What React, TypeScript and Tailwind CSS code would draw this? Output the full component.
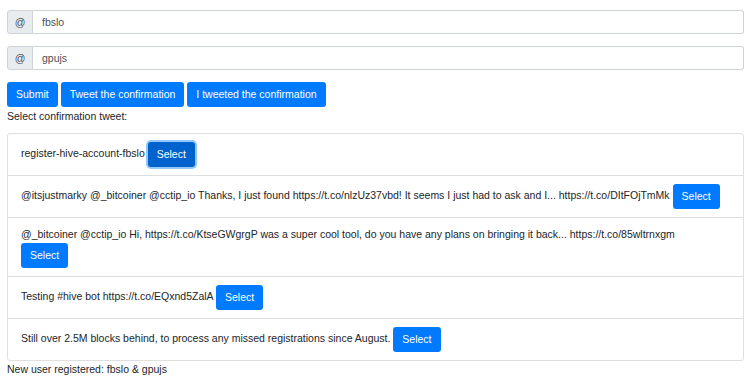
import { useState } from 'react';

interface Tweet {
  text: string;
  wrap?: boolean;
}

const tweets: Tweet[] = [
  { text: 'register-hive-account-fbslo' },
  { text: '@itsjustmarky @_bitcoiner @cctip_io Thanks, I just found https://t.co/nlzUz37vbd! It seems I just had to ask and I... https://t.co/DItFOjTmMk' },
  { text: '@_bitcoiner @cctip_io Hi, https://t.co/KtseGWgrgP was a super cool tool, do you have any plans on bringing it back... https://t.co/85wltrnxgm', wrap: true },
  { text: 'Testing #hive bot https://t.co/EQxnd5ZalA' },
  { text: 'Still over 2.5M blocks behind, to process any missed registrations since August.' },
];

function InputGroup({ value }: { value: string }) {
  return (
    <div className="flex h-[24px] w-full">
      <span className="flex w-[26px] items-center justify-center rounded-l-[3px] border border-[#ced4da] bg-[#e9ecef] text-[#495057]">
        @
      </span>
      <input
        className="flex-1 rounded-r-[3px] border border-l-0 border-[#ced4da] bg-white px-[9px] text-[#495057] outline-none"
        defaultValue={value}
      />
    </div>
  );
}

export default function App() {
  const [selected] = useState(0);

  return (
    <div
      className="px-[7px] pt-[10px] text-[10.5px] leading-[17px] text-[#212529]"
      style={{ fontFamily: '"Liberation Sans", Arial, sans-serif' }}
    >
      <InputGroup value="fbslo" />
      <div className="mt-[12px]">
        <InputGroup value="gpujs" />
      </div>

      {/* Actions */}
      <div className="mt-[12px] flex gap-[3px]">
        <button className="h-[25px] rounded-[3px] bg-[#007bff] px-[9px] text-white">Submit</button>
        <button className="h-[25px] rounded-[3px] bg-[#007bff] px-[9px] text-white">Tweet the confirmation</button>
        <button className="h-[25px] rounded-[3px] bg-[#007bff] px-[9px] text-white">I tweeted the confirmation</button>
      </div>
      <p className="mt-[1px]">Select confirmation tweet:</p>

      {/* Tweet list */}
      <ul className="mt-[8px] rounded-[3px] border border-[#dfdfdf]">
        {tweets.map((t, i) => (
          <li key={i} className={`px-[13px] py-[8px] ${i > 0 ? 'border-t border-[#dfdfdf]' : ''}`}>
            {t.text}{' '}
            {t.wrap && <br />}
            <button
              className={`h-[25px] rounded-[3px] px-[9px] align-middle text-white ${
                i === selected
                  ? 'bg-[#0062cc] shadow-[0_0_0_2px_rgba(38,143,255,0.5)]'
                  : 'bg-[#007bff]'
              }`}
            >
              Select
            </button>
          </li>
        ))}
      </ul>
      <p>New user registered: fbslo &amp; gpujs</p>
    </div>
  );
}
